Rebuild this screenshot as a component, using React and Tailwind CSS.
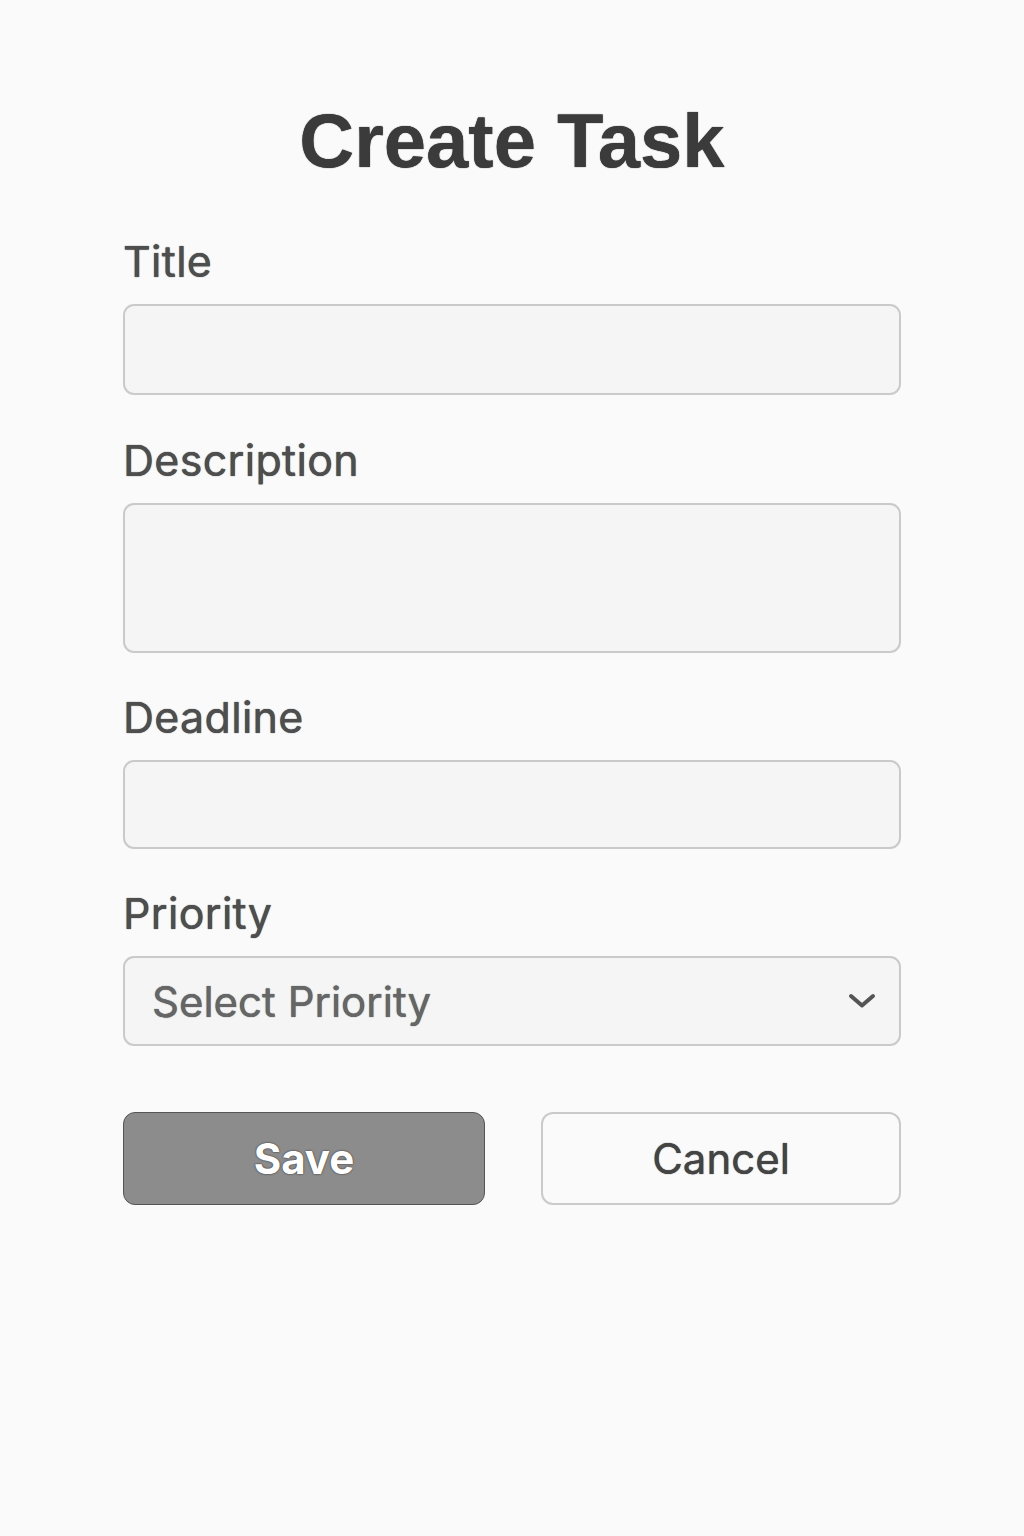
import React, { useState } from "react";

function Label({ children }) {
  return (
    <label className="block text-[43px] leading-none font-normal text-[#4e4e4e] tracking-[0.3px] mb-[21px] [text-shadow:0_0_1px_#222]">
      {children}
    </label>
  );
}

export default function App() {
  const [priority, setPriority] = useState("");

  return (
    <div
      className="min-h-[1536px] w-full bg-[#fafafa] pt-[103px]"
      style={{ fontFamily: "Inter, 'Noto Sans', sans-serif" }}
    >
      <div className="w-[778px] ml-[123px]">
        <h1
          className="text-center text-[76px] leading-none font-bold text-[#3b3b3b] mb-[61px] [text-shadow:0_0_1px_#111]"
          style={{ fontFamily: "'Liberation Sans', Arial, sans-serif" }}
        >
          Create Task
        </h1>

        {/* Title */}
        <div>
          <Label>Title</Label>
          <input
            type="text"
            className="block w-full h-[91px] rounded-[11px] border-2 border-[#cacaca] bg-[#f5f5f5] outline-none"
          />
        </div>

        {/* Description */}
        <div className="mt-[44px]">
          <Label>Description</Label>
          <textarea className="block w-full h-[150px] rounded-[11px] border-2 border-[#cacaca] bg-[#f5f5f5] outline-none resize-none" />
        </div>

        {/* Deadline */}
        <div className="mt-[43px]">
          <Label>Deadline</Label>
          <input
            type="text"
            className="block w-full h-[89px] rounded-[11px] border-2 border-[#cacaca] bg-[#f5f5f5] outline-none"
          />
        </div>

        {/* Priority */}
        <div className="mt-[43px]">
          <Label>Priority</Label>
          <div className="relative">
            <select
              value={priority}
              onChange={(e) => setPriority(e.target.value)}
              className="block w-full h-[90px] appearance-none rounded-[11px] border-2 border-[#cacaca] bg-[#f5f5f5] pl-[27px] text-[42px] text-[#666] outline-none [text-shadow:0_0_1px_#444]"
            >
              <option value="">Select Priority</option>
              <option value="low">Low</option>
              <option value="medium">Medium</option>
              <option value="high">High</option>
            </select>
            <svg
              className="absolute right-[24px] top-1/2 -translate-y-1/2 pointer-events-none"
              width="30"
              height="18"
              viewBox="0 0 30 18"
              fill="none"
            >
              <path
                d="M4 4 L15 13.5 L26 4"
                stroke="#555"
                strokeWidth="4"
                strokeLinecap="round"
                strokeLinejoin="round"
              />
            </svg>
          </div>
        </div>

        {/* Buttons */}
        <div className="mt-[66px] flex justify-between">
          <button className="w-[362px] h-[93px] rounded-[12px] bg-[#8c8c8c] border border-[#555] text-white text-[42px] font-bold [text-shadow:0_0_2px_#222]">
            Save
          </button>
          <button className="w-[360px] h-[93px] rounded-[12px] bg-[#fafafa] border-2 border-[#cacaca] text-[#444] text-[42px] font-normal [text-shadow:0_0_1px_#222]">
            Cancel
          </button>
        </div>
      </div>
    </div>
  );
}
